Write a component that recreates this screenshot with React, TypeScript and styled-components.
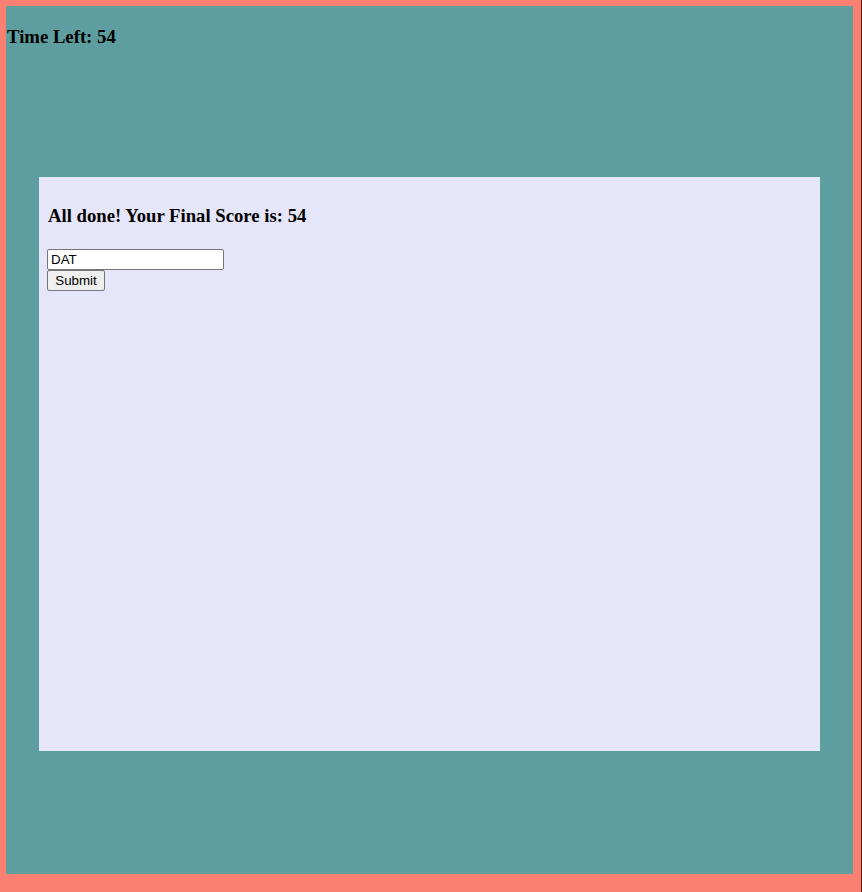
import React from "react";
import styled, { createGlobalStyle } from "styled-components";

const GlobalStyle = createGlobalStyle`
  html, body {
    margin: 0;
    padding: 0;
  }
  body {
    background: #fa8072;
    font-family: "Liberation Serif", "Times New Roman", serif;
  }
`;

const Page = styled.div`
  box-sizing: border-box;
  width: 862px;
  height: 892px;
  padding: 6px 8px 18px 6px;
  background: #fa8072;
  border-right: 1px solid #4a2018;
`;

const Frame = styled.main`
  display: flex;
  flex-direction: column;
  align-items: stretch;
  height: 868px;
  background: #5f9ea0;
`;

const Timer = styled.h3`
  margin: 20px 0 18px 1px;
  font-size: 18.72px;
  line-height: 22px;
  font-weight: bold;
  color: #000;
`;

const Card = styled.section`
  box-sizing: border-box;
  margin: 111px 33px 0 33px;
  height: 574px;
  padding: 8px;
  background: #e6e6fa;
  display: flex;
  flex-direction: column;
  align-items: flex-start;
`;

const Heading = styled.h3`
  margin: 20px 0 22px 1px;
  font-size: 18.72px;
  line-height: 22px;
  font-weight: bold;
  color: #000;
`;

const Form = styled.form`
  display: flex;
  flex-direction: column;
  align-items: flex-start;
`;

const NameInput = styled.input`
  box-sizing: border-box;
  width: 177px;
  height: 21px;
  margin: 0;
  padding: 1px 3px;
  font-family: "Liberation Sans", Arial, sans-serif;
  font-size: 13.33px;
  color: #000;
  background: #fff;
  border: 1px solid #767676;
  border-radius: 2px;
`;

const SubmitButton = styled.button`
  box-sizing: border-box;
  width: 58px;
  height: 21px;
  margin: 0;
  padding: 1px 6px;
  font-family: "Liberation Sans", Arial, sans-serif;
  font-size: 13.33px;
  color: #000;
  background: #efefef;
  border: 1px solid #767676;
  border-radius: 2px;
`;

export default function App() {
  return (
    <>
      <GlobalStyle />
      <Page>
        <Frame>
          <Timer>Time Left: 54</Timer>
          <Card>
            <Heading>All done! Your Final Score is: 54</Heading>
            <Form onSubmit={(e) => e.preventDefault()}>
              <NameInput type="text" defaultValue="DAT" />
              <SubmitButton type="submit">Submit</SubmitButton>
            </Form>
          </Card>
        </Frame>
      </Page>
    </>
  );
}
